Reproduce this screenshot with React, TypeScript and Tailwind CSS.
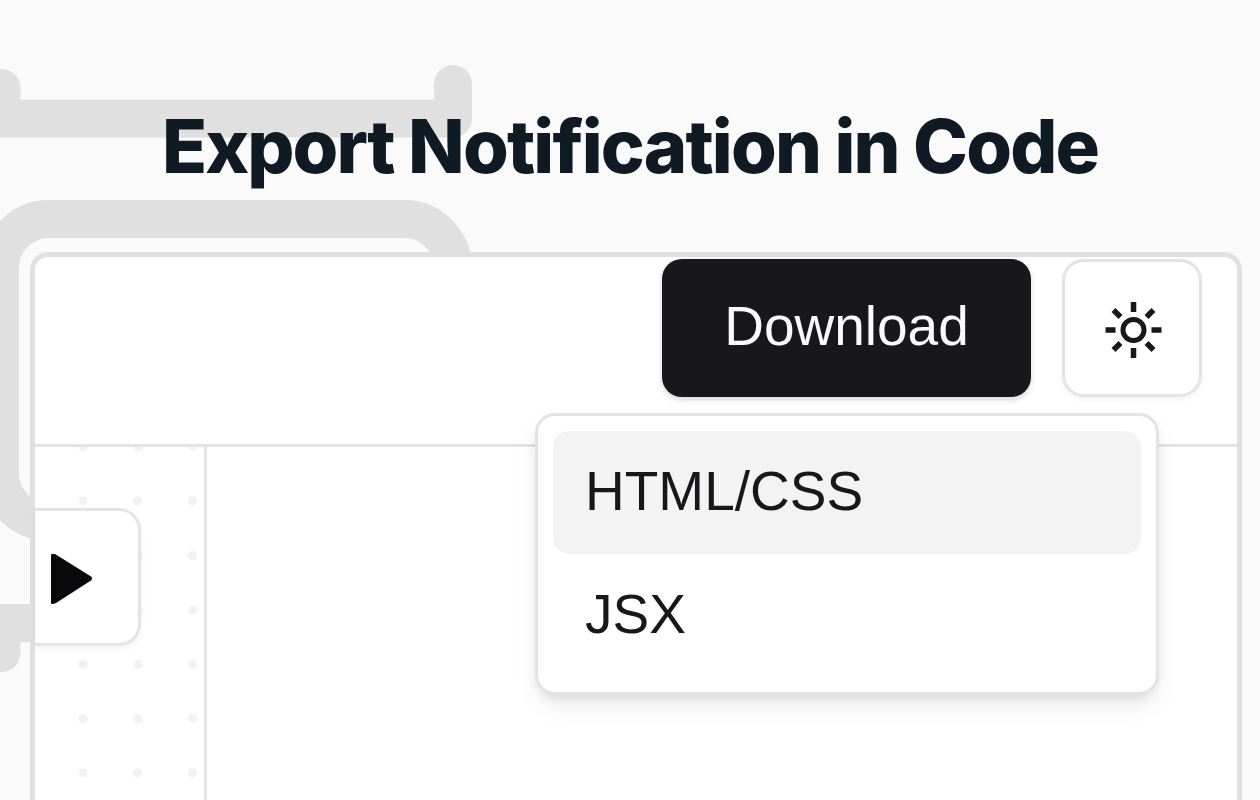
const formats = ["HTML/CSS", "JSX"];

const Backdrop = () => (
  <svg
    aria-hidden="true"
    className="absolute top-0 left-0 h-[800px] w-[500px]"
    fill="none"
    stroke="#e0e0e0"
    strokeLinecap="round"
    strokeLinejoin="round"
    strokeWidth="38"
    viewBox="0 0 500 800"
  >
    <path d="M453 84V118.500H1.500V88" />
    <rect height="303" rx="49" width="453" x="0" y="219" />
    <path d="M453 657V623H1.500V653" />
  </svg>
);

const SunIcon = () => (
  <svg aria-hidden="true" className="size-[60px]" fill="none" stroke="#18181b" viewBox="0 0 60 60">
    <circle cx="31.500" cy="32" r="10.500" strokeWidth="5" />
    <path
      d="M31.500 4v10M31.500 50v10M3.500 32h10M49.500 32h10M11.500 12l7 7M44.500 45l7 7M51.500 12l-7 7M18.500 45l-7 7"
      strokeWidth="5.500"
    />
  </svg>
);

const PlayIcon = () => (
  <svg aria-hidden="true" className="h-[50px] w-[43px]" fill="#09090b" viewBox="0 0 43 50">
    <path d="M1 1Q1 0 2 0H5L41 22.500Q43 24.500 41 26.500L6 49Q4 50 2 50Q1 50 1 49Z" />
  </svg>
);

const DotGrid = () => (
  <svg aria-hidden="true" className="absolute inset-0 size-full">
    <defs>
      <pattern height="54.400" id="dots" patternUnits="userSpaceOnUse" width="54.800" x="21" y="-27.500">
        <circle cx="27" cy="27.200" fill="#f2f2f3" r="4.600" />
      </pattern>
    </defs>
    <rect fill="url(#dots)" height="100%" width="100%" />
  </svg>
);

const FormatMenu = () => (
  <div
    className="absolute top-[156px] right-[78px] z-10 w-[624px] rounded-[20px] border-3 border-[#e4e4e7] bg-white p-[15px] shadow-[0_12px_24px_-2px_rgba(0,0,0,0.08),0_6px_12px_-4px_rgba(0,0,0,0.1)]"
    role="menu"
  >
    {formats.map((format, index) => (
      <button
        key={format}
        className={`flex h-[123px] w-full items-center rounded-2xl px-8 pb-1 text-left ${
          index === 0 ? "bg-[#f3f3f3]" : "bg-white"
        }`}
        role="menuitem"
        type="button"
      >
        {format}
      </button>
    ))}
  </div>
);

const App = () => {
  return (
    <main className="relative flex min-h-screen flex-col overflow-hidden bg-[#fafafa] pr-[18px] pl-[30px]">
      <Backdrop />

      <h1 className="relative -mr-[18px] -ml-[30px] flex h-[252px] items-center justify-center pt-10 text-center font-['Inter',sans-serif] text-[74px] leading-[80px] font-extrabold tracking-tight text-[#0f1a25]">
        Export Notification in Code
      </h1>

      <section className="relative flex flex-1 flex-col rounded-t-[18px] border-x-5 border-t-5 border-[#e0e0e0] bg-white font-['Liberation_Sans',Arial,sans-serif] text-[55px] leading-[64px] text-[#18181b]">
        <header className="relative flex h-[190px] items-start justify-end gap-[31px] border-b-3 border-[#e4e4e7] pt-0.5 pr-[35px]">
          <button
            className="flex h-[138px] w-[369px] items-center justify-center rounded-[20px] bg-[#18181b] pb-1 text-[#fafafa] shadow-[0_3px_6px_rgba(0,0,0,0.15)]"
            type="button"
          >
            Download
          </button>
          <button
            aria-label="Toggle theme"
            className="flex h-[138px] w-[140px] items-center justify-center rounded-[22px] border-3 border-[#e4e4e7] bg-white shadow-[0_3px_6px_rgba(0,0,0,0.05)]"
            type="button"
          >
            <SunIcon />
          </button>
          <FormatMenu />
        </header>

        <div className="flex flex-1">
          <aside className="relative w-[172px] border-r-3 border-[#e4e4e7] pt-[61px]">
            <DotGrid />
            <button
              aria-label="Play"
              className="relative flex h-[138px] w-[106px] items-center rounded-r-[22px] border-y-3 border-r-3 border-[#e4e4e7] bg-white pt-1 pl-[15px] shadow-[0_3px_6px_rgba(0,0,0,0.05)]"
              type="button"
            >
              <PlayIcon />
            </button>
          </aside>
        </div>
      </section>
    </main>
  );
};

export default App;
